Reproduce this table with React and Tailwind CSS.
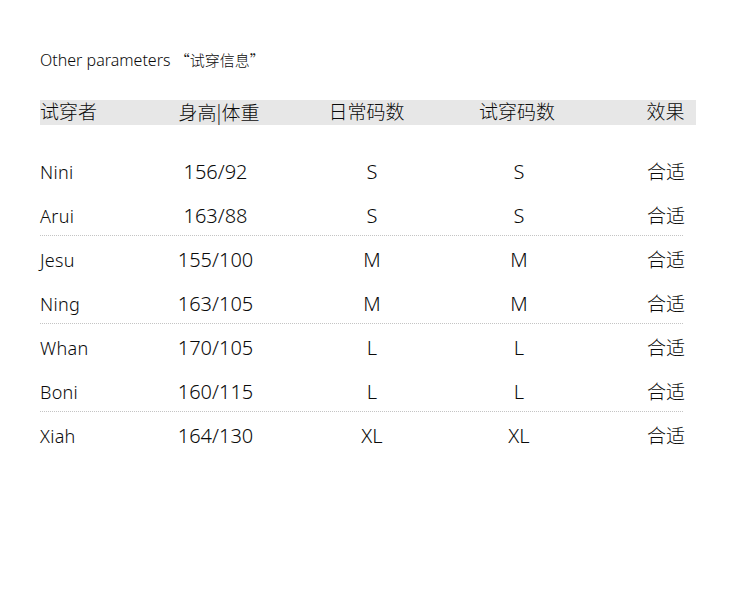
import React from "react";

const rows = [
  ["Nini", "156/92", "S", "S", "合适"],
  ["Arui", "163/88", "S", "S", "合适"],
  ["Jesu", "155/100", "M", "M", "合适"],
  ["Ning", "163/105", "M", "M", "合适"],
  ["Whan", "170/105", "L", "L", "合适"],
  ["Boni", "160/115", "L", "L", "合适"],
  ["Xiah", "164/130", "XL", "XL", "合适"],
];

const cjk = { fontFamily: '"Noto Sans CJK SC", sans-serif' };

function Row({ r }) {
  return (
    <div className="flex h-[44px] items-center">
      <div className="w-[110px] shrink-0 text-[18px] tracking-[0.3px]">{r[0]}</div>
      <div className="w-[131px] shrink-0 text-center text-[20px]">{r[1]}</div>
      <div className="w-[182px] shrink-0 text-center text-[20px]">{r[2]}</div>
      <div className="w-[112px] shrink-0 text-center text-[20px]">{r[3]}</div>
      <div className="w-[182px] shrink-0 text-center text-[19px]">{r[4]}</div>
    </div>
  );
}

function Line() {
  return <div className="-mt-[3px] mb-[2px] h-0 w-[643px] border-t border-dotted border-[#c4c4c4]" />;
}

export default function App() {
  return (
    <div
      className="h-[593px] w-[750px] overflow-hidden bg-white pl-[40px] pt-[50px] font-light text-[#0a0a0a]"
      style={{ fontFamily: '"Noto Sans", "Noto Sans CJK SC", sans-serif' }}
    >
      <div className="h-[20px] text-[16px] leading-[20px]">
        Other parameters{" "}
        <span className="text-[15px]" style={cjk}>“试穿信息”</span>
      </div>
      <div className="mt-[30px] flex h-[25px] w-[656px] items-center bg-[#e7e7e7] text-[19px]">
        <div className="w-[110px] shrink-0">试穿者</div>
        <div className="w-[138px] shrink-0 text-center">
          身高<span style={cjk}>|</span>体重
        </div>
        <div className="w-[157px] shrink-0 text-center">日常码数</div>
        <div className="w-[144px] shrink-0 text-center">试穿码数</div>
        <div className="w-[153px] shrink-0 text-center">效果</div>
      </div>
      <div className="mt-[25px]">
        <Row r={rows[0]} />
        <Row r={rows[1]} />
        <Line />
        <Row r={rows[2]} />
        <Row r={rows[3]} />
        <Line />
        <Row r={rows[4]} />
        <Row r={rows[5]} />
        <Line />
        <Row r={rows[6]} />
      </div>
    </div>
  );
}
